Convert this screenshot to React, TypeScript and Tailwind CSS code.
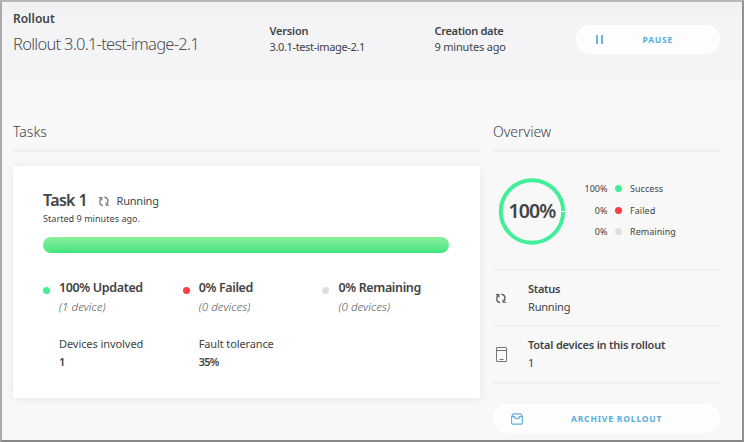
import React from "react";

function SyncIcon({ color }: { color: string }) {
  return (
    <svg width="12" height="11" viewBox="0 0 12 11" fill="none" stroke={color} strokeWidth="1.3">
      <path d="M5 9.7C2.8 9.2 1.6 7.4 1.8 5.2C1.9 4 2.4 3.1 3.2 2.3" />
      <path d="M0.9 1.6H3.9V4.4" strokeWidth="1.1" />
      <path d="M6.3 1.1C8.7 1.5 10 3.3 9.9 5.4C9.8 6.8 9.3 7.8 8.5 8.6" />
      <path d="M11.1 9.3H8.1V6.5" strokeWidth="1.1" />
    </svg>
  );
}

function DeviceIcon() {
  return (
    <svg width="11" height="15" viewBox="0 0 11 15" fill="none" stroke="#727476">
      <rect x="0.5" y="0.5" width="10" height="14" rx="0.4" />
      <path d="M1 3.5H10M3.5 12.5H7.5" />
    </svg>
  );
}

function ArchiveIcon() {
  return (
    <svg width="12" height="12" viewBox="0 0 12 12" fill="none" stroke="#5aaedc" strokeWidth="1.1">
      <path d="M0.6 3.6L2.2 0.9H9.8L11.4 3.6V10.2Q11.4 11.1 10.5 11.1H1.5Q0.6 11.1 0.6 10.2Z" />
      <path d="M0.6 3.6H3.4Q3.7 5.8 6 5.8Q8.3 5.8 8.6 3.6H11.4" />
    </svg>
  );
}

function Stat({ color, title, sub }: { color: string; title: string; sub: string }) {
  return (
    <div className="flex w-[139.7px] shrink-0">
      <span className={`mt-[8px] h-[7px] w-[7px] shrink-0 rounded-full ${color}`} />
      <div className="ml-[9px] whitespace-nowrap">
        <div className="text-[12.5px] leading-[17px] font-semibold tracking-[-0.36px]">{title}</div>
        <div className="mt-[3px] text-[11.5px] leading-[16px] font-light tracking-[0.05px] text-[#55585a] italic">{sub}</div>
      </div>
    </div>
  );
}

function Legend({ value, color, label }: { value: string; color: string; label: string }) {
  return (
    <div className="flex h-[21.5px] items-center text-[9px]">
      <span className="w-[29.5px] text-right">{value}</span>
      <span className={`ml-[7.5px] h-[7px] w-[7px] rounded-full ${color}`} />
      <span className="ml-[8px] tracking-[0.05px]">{label}</span>
    </div>
  );
}

export default function App() {
  return (
    <div className="h-[442px] w-[744px] overflow-hidden border-2 border-t-[#b7b7b7] border-r-[#929292] border-b-[#888888] border-l-[#ababab] bg-[#f8f8f8] font-['Noto_Sans','Liberation_Sans',sans-serif] whitespace-nowrap text-[#414345]">
      <header className="flex h-[78px] bg-linear-to-b from-[#f1f1f3] to-[#f4f4f7] to-20% pl-[11px]">
        <div className="w-[256.5px] pt-[8px]">
          <div className="text-[12px] leading-[18px] font-semibold">Rollout</div>
          <div className="mt-[3px] text-[16.5px] leading-[26px] font-light tracking-[-0.73px] text-[#4c4e50]">Rollout 3.0.1-test-image-2.1</div>
        </div>
        <div className="w-[165px] pt-[21px] text-[11px] leading-[16px]">
          <div className="font-semibold tracking-[-0.2px]">Version</div>
          <div className="tracking-[-0.36px]">3.0.1-test-image-2.1</div>
        </div>
        <div className="w-[141.5px] pt-[21px] text-[11px] leading-[16px]">
          <div className="font-semibold tracking-[-0.3px]">Creation date</div>
          <div className="tracking-[-0.2px]">9 minutes ago</div>
        </div>
        <button className="mt-[23px] flex h-[29px] w-[144px] items-center rounded-full border-2 border-white bg-[#fdfdfd] pl-[18px] text-[#5aaedc]">
          <span className="flex h-[9px] w-[7px] justify-between">
            <i className="w-[2px] bg-[#6ab5df]" />
            <i className="w-[2px] bg-[#6ab5df]" />
          </span>
          <span className="mt-px ml-[39.5px] text-[8.5px] font-bold tracking-[0.8px]">PAUSE</span>
        </button>
      </header>

      <main className="flex gap-[13px] pt-[40px] pl-[11px]">
        <section className="w-[467px]">
          <h2 className="h-[32px] border-b-3 border-[#f0f0f4] text-[14px] leading-[24px] font-light">Tasks</h2>
          <div className="mt-[14px] h-[232px] rounded-[1px] bg-white px-[30px] pt-[23px] shadow-[0_1px_10px_rgba(0,0,0,0.08)]">
            <div className="flex h-[22px] items-center">
              <span className="w-[55px] text-[16px] leading-[22px] font-semibold tracking-[-0.65px]">Task 1</span>
              <span className="mt-[2px]"><SyncIcon color="#77797b" /></span>
              <span className="mt-[3px] ml-[6.5px] text-[11px] tracking-[-0.2px]">Running</span>
            </div>
            <div className="mt-[1px] text-[9px] leading-[14px] tracking-[0.05px]">Started 9 minutes ago.</div>
            <div className="mt-[11px] h-[16px] w-[406px] rounded-full bg-linear-to-b from-[#8aee9b] to-[#3de57f]" />
            <div className="mt-[26px] flex">
              <Stat color="bg-[#42ee98]" title="100% Updated" sub="(1 device)" />
              <Stat color="bg-[#ff3c40]" title="0% Failed" sub="(0 devices)" />
              <Stat color="bg-[#dedede]" title="0% Remaining" sub="(0 devices)" />
            </div>
            <div className="mt-[20px] flex pl-[16px] text-[11px] leading-[18px]">
              <div className="w-[139.7px]">
                <div className="tracking-[-0.07px]">Devices involved</div>
                <div className="font-semibold">1</div>
              </div>
              <div>
                <div className="tracking-[-0.12px]">Fault tolerance</div>
                <div className="font-semibold tracking-[-0.7px]">35%</div>
              </div>
            </div>
          </div>
        </section>

        <aside className="w-[227px]">
          <h2 className="h-[32px] border-b-3 border-[#f0f0f4] text-[14px] leading-[24px] font-light">Overview</h2>
          <div className="flex h-[119px] border-b-2 border-[#f0f0f4] pt-[26px] pl-[5px]">
            <div className="grid h-[68px] w-[68px] place-items-center">
              <svg className="col-start-1 row-start-1" width="68" height="68" viewBox="0 0 68 68">
                <circle cx="34" cy="33.5" r="31.2" fill="none" stroke="#42ee98" strokeWidth="4" />
                <path d="M62.5 33.5H68" stroke="#f8f8f8" strokeWidth="1" />
              </svg>
              <span className="col-start-1 row-start-1 mb-[2px] text-[19.5px] font-semibold tracking-[-0.9px]">100%</span>
            </div>
            <div className="ml-[12px]">
              <Legend value="100%" color="bg-[#42ee98]" label="Success" />
              <Legend value="0%" color="bg-[#ff3c40]" label="Failed" />
              <Legend value="0%" color="bg-[#dedede]" label="Remaining" />
            </div>
          </div>
          <div className="flex h-[56px] items-center border-b-2 border-[#f0f0f4] pl-[2px] text-[11px] leading-[18px]">
            <span className="w-[33px]"><SyncIcon color="#55585a" /></span>
            <div>
              <div className="font-semibold tracking-[-0.3px]">Status</div>
              <div className="tracking-[-0.2px]">Running</div>
            </div>
          </div>
          <div className="flex h-[57px] items-center border-b-2 border-[#f0f0f4] pl-[3px] text-[11px] leading-[18px]">
            <span className="w-[32px]"><DeviceIcon /></span>
            <div className="mb-[2px]">
              <div className="font-semibold tracking-[-0.21px]">Total devices in this rollout</div>
              <div>1</div>
            </div>
          </div>
          <button className="mt-[20px] flex h-[29px] w-[227px] items-center rounded-full border-2 border-white bg-[#fdfdfd] pl-[16px] text-[#5aaedc]">
            <ArchiveIcon />
            <span className="mt-px ml-[48px] text-[8.5px] font-bold tracking-[0.83px]">ARCHIVE ROLLOUT</span>
          </button>
        </aside>
      </main>
    </div>
  );
}
